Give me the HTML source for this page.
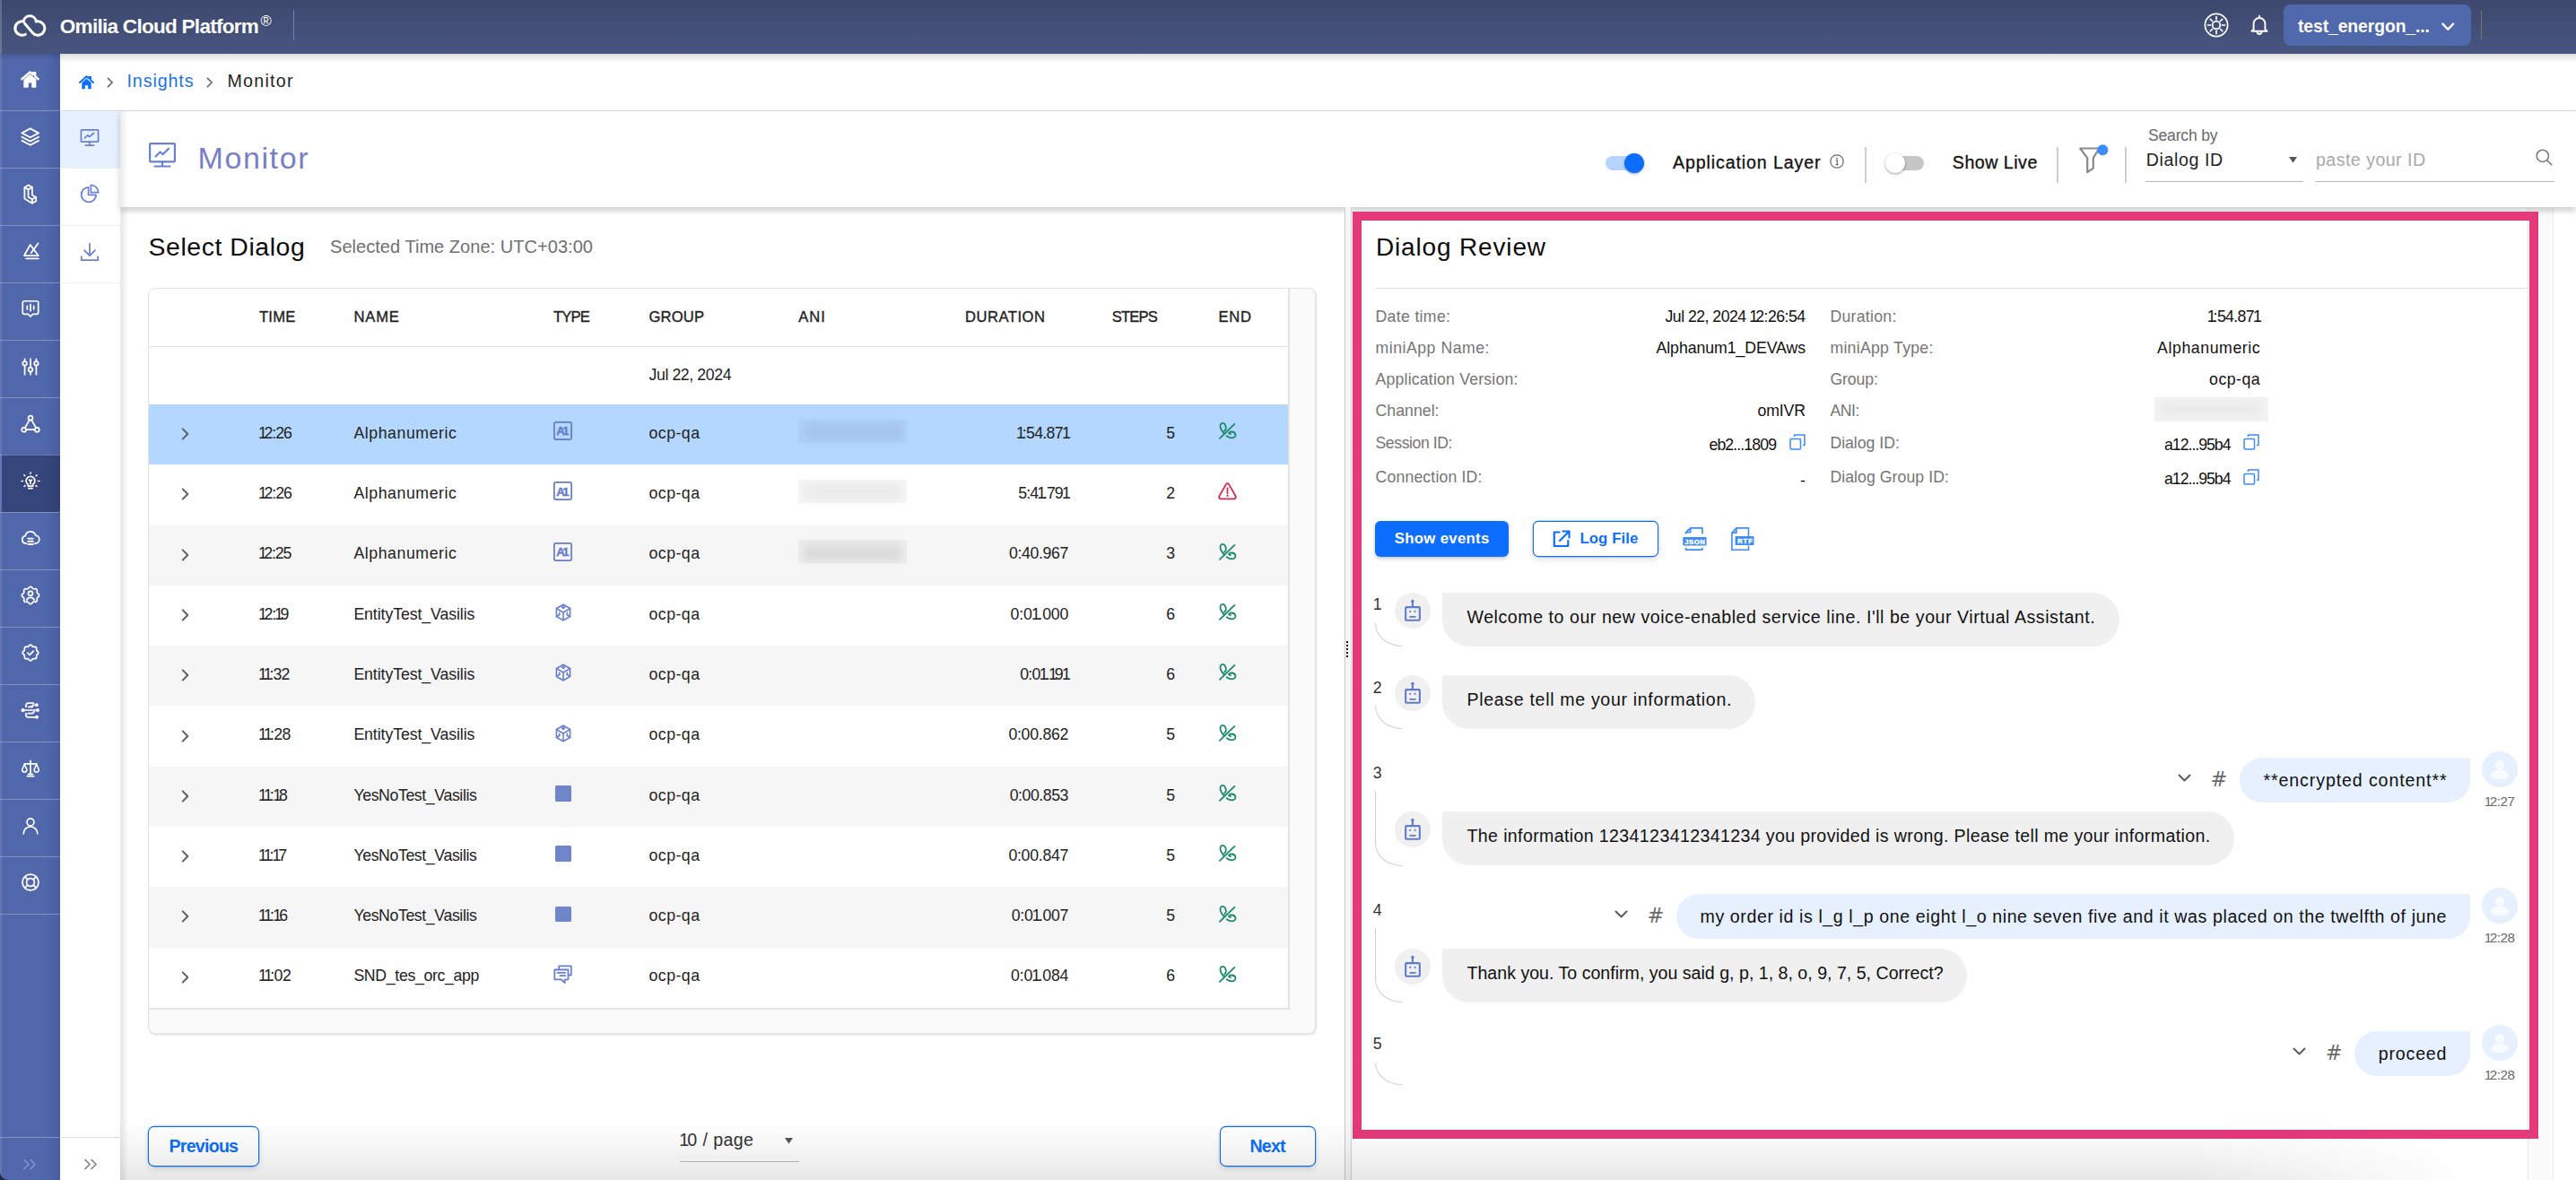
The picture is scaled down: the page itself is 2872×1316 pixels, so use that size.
<!DOCTYPE html>
<html lang="en"><head><meta charset="utf-8"><title>Monitor - Omilia Cloud Platform</title>
<style>
html,body{margin:0;padding:0;}
body{width:2872px;height:1316px;overflow:hidden;background:#fff;position:relative;font-family:"Liberation Sans",sans-serif;}
.a{position:absolute;}
.t{position:absolute;white-space:pre;font-family:"Liberation Sans",sans-serif;}
svg{position:absolute;overflow:visible;}
.ic{fill:none;stroke:#fff;stroke-width:1.9;stroke-linecap:round;stroke-linejoin:round;}
.ip{fill:none;stroke:#6c80d0;stroke-width:1.9;stroke-linecap:round;stroke-linejoin:round;}
</style></head><body>
<div class="a" style="left:67px;top:60px;width:2805px;height:63px;background:#fff;border-bottom:1px solid #d9d9d9;"></div>
<div class="a" style="left:134px;top:231px;width:2738px;height:1085px;background:#fff;"></div>
<div class="a" style="left:67px;top:60px;width:2805px;height:10px;background:linear-gradient(rgba(0,0,0,.13),rgba(0,0,0,0));"></div>
<div class="a" style="left:2818.3px;top:231px;width:26.5px;height:1085px;background:#fafafa;border-left:1.5px solid #e8e8e8;border-right:1.5px solid #ebebeb;"></div>
<div class="a" style="left:0;top:0;width:2872px;height:60px;background:linear-gradient(#3c486d,#48557f);"></div>
<svg style="left:14px;top:13px" width="38" height="30" viewBox="0 0 38 30"><path d="M14.4 25.2A7.7 7.7 0 1 1 12.2 11A7.1 7.1 0 0 1 26.3 11A7.7 7.7 0 1 1 22.6 23.9L13.6 13.2" fill="none" stroke="#fff" stroke-width="3" stroke-linecap="round" stroke-linejoin="round"/></svg>
<span class="t" style="left:66.8px;top:19px;font-size:22.5px;line-height:22.5px;letter-spacing:-0.71px;color:#fff;font-weight:700;">Omilia Cloud Platform</span>
<span class="t" style="left:290.5px;top:15px;font-size:16.5px;line-height:16.5px;letter-spacing:0.49px;color:#fff;">®</span>
<div class="a" style="left:327px;top:11px;width:1px;height:34px;background:#6f80c4;"></div>
<svg style="left:2457px;top:14px" width="28" height="28" viewBox="0 0 28 28"><g fill="none" stroke="#fff" stroke-width="1.7" stroke-linecap="round"><circle cx="14" cy="14" r="12.6"/><circle cx="14" cy="14" r="4.3"/><path d="M14 4.5v3.2M14 20.3v3.2M4.5 14h3.2M20.3 14h3.2M7.3 7.3l2.2 2.2M18.5 18.5l2.2 2.2M7.3 20.7l2.2-2.2M18.5 9.5l2.2-2.2"/></g></svg>
<svg style="left:2508px;top:16px" width="22" height="23" viewBox="0 0 22 23"><path d="M11 1.6v1.6M4.6 16.8V10.4a6.4 6.4 0 0 1 12.8 0v6.4l2.2 2H2.4zM8.6 19.6a2.4 2.4 0 0 0 4.8 0" fill="none" stroke="#fff" stroke-width="1.9" stroke-linecap="round" stroke-linejoin="round"/></svg>
<div class="a" style="left:2546px;top:5px;width:209px;height:46px;border-radius:8px;background:#5068ac;"></div>
<span class="t" style="left:2562.0px;top:20px;font-size:19.3px;line-height:19.3px;letter-spacing:-0.06px;color:#fff;font-weight:700;">test_energon_...</span>
<svg style="left:2722px;top:25px" width="14.500" height="10" viewBox="0 0 16 11"><path d="M1.500 1.800L8 8.600l6.500-6.800" fill="none" stroke="#fff" stroke-width="2.600" stroke-linecap="round" stroke-linejoin="round"/></svg>
<div class="a" style="left:2766px;top:12px;width:1px;height:32px;background:#7c7766;"></div>
<div class="a" style="left:0;top:60px;width:67px;height:1256px;background:#1f2845;"></div>
<div class="a" style="left:0;top:60px;width:67px;height:1256px;background:linear-gradient(90deg,#6476b3 0,#6476b3 2px,#5067ab 2px,#5067ab 52px,#485d9e 67px);border-bottom-left-radius:9px;"></div>
<div class="a" style="left:2px;top:507.1px;width:65px;height:64px;background:linear-gradient(90deg,#36457b 0,#36457b 50px,#323f72 65px);"></div>
<div class="a" style="left:0;top:123.1px;width:67px;height:1px;background:rgba(255,255,255,.28);"></div>
<div class="a" style="left:0;top:187.1px;width:67px;height:1px;background:rgba(255,255,255,.28);"></div>
<div class="a" style="left:0;top:251.1px;width:67px;height:1px;background:rgba(255,255,255,.28);"></div>
<div class="a" style="left:0;top:315.1px;width:67px;height:1px;background:rgba(255,255,255,.28);"></div>
<div class="a" style="left:0;top:379.1px;width:67px;height:1px;background:rgba(255,255,255,.28);"></div>
<div class="a" style="left:0;top:443.1px;width:67px;height:1px;background:rgba(255,255,255,.28);"></div>
<div class="a" style="left:0;top:507.1px;width:67px;height:1px;background:rgba(255,255,255,.28);"></div>
<div class="a" style="left:0;top:571.1px;width:67px;height:1px;background:rgba(255,255,255,.28);"></div>
<div class="a" style="left:0;top:635.1px;width:67px;height:1px;background:rgba(255,255,255,.28);"></div>
<div class="a" style="left:0;top:699.1px;width:67px;height:1px;background:rgba(255,255,255,.28);"></div>
<div class="a" style="left:0;top:763.1px;width:67px;height:1px;background:rgba(255,255,255,.28);"></div>
<div class="a" style="left:0;top:827.1px;width:67px;height:1px;background:rgba(255,255,255,.28);"></div>
<div class="a" style="left:0;top:891.1px;width:67px;height:1px;background:rgba(255,255,255,.28);"></div>
<div class="a" style="left:0;top:955.1px;width:67px;height:1px;background:rgba(255,255,255,.28);"></div>
<div class="a" style="left:0;top:1019.1px;width:67px;height:1px;background:rgba(255,255,255,.28);"></div>
<div class="a" style="left:0;top:1268px;width:67px;height:1px;background:rgba(255,255,255,.28);"></div>
<svg style="left:25px;top:1292px" width="16" height="13" viewBox="0 0 16 13"><path d="M2 1.5l5 5-5 5M9 1.5l5 5-5 5" fill="none" stroke="#8497d4" stroke-width="1.7" stroke-linecap="round" stroke-linejoin="round"/></svg>
<svg class="ic" style="left:22.0px;top:77.6px" width="23" height="22" viewBox="0 0 24 24"><path d="M2 11.2L12 2.6l3.6 3.1V3.6h2.6v4.3l3.8 3.3" stroke-width="2.6"/><path d="M5 11.5L12 5.6l7 5.9V21h-4.6v-5.6H9.6V21H5z" fill="#fff" stroke-width="1"/></svg>
<svg class="ic" style="left:21.8px;top:140.8px" width="23.5" height="23.5" viewBox="0 0 24 24"><path d="M12 2.5l9.5 5-9.5 5-9.5-5z"/><path d="M2.5 12l9.5 5 9.5-5"/><path d="M2.5 16.2l9.5 5 9.5-5"/></svg>
<svg class="ic" style="left:24.0px;top:204.8px" width="19" height="22.5" viewBox="3 1 19 24"><path d="M6 5.2l4.6-2.7 4.4 2.6v9.2l4.6 2.7v4.6l-4.6 2.5L6 18.6z"/><path d="M6 5.2l4.4 2.6 4.6-2.7M10.4 7.8v9l4.6 2.6 4.6-2.6M15 19.4v4.6"/></svg>
<svg class="ic" style="left:23.5px;top:268.4px" width="22" height="22" viewBox="0 0 24 24"><path d="M10.6 5.5L3.2 18.6h17.3z"/><path d="M20.2 3.8L11.6 15.4" /><path d="M5.5 22.2h15"/></svg>
<svg class="ic" style="left:22.5px;top:333.3px" width="22" height="22" viewBox="0 0 24 24"><path d="M4.5 3h15a2 2 0 0 1 2 2v12a2 2 0 0 1-2 2h-4.8L12 21.8 9.3 19H4.5a2 2 0 0 1-2-2V5a2 2 0 0 1 2-2z"/><path d="M8 9v4M12 7v8M16 9v4"/></svg>
<svg class="ic" style="left:22.5px;top:397.6px" width="22" height="22" viewBox="0 0 24 24"><path d="M5 2.5v3M5 10.5v11M12 2.5v10.5M12 18v3.5M19 2.5v3M19 10.5v11"/><circle cx="5" cy="8" r="2.5"/><circle cx="12" cy="15.5" r="2.5"/><circle cx="19" cy="8" r="2.5"/></svg>
<svg class="ic" style="left:22.5px;top:461.6px" width="22" height="22" viewBox="0 0 24 24"><circle cx="12" cy="4.5" r="2.7"/><circle cx="4" cy="18.8" r="2.7"/><circle cx="20" cy="18.8" r="2.7"/><path d="M10.7 6.9L5.4 16.4M13.3 6.9l5.3 9.5M6.8 18.8h10.4"/></svg>
<svg class="ic" style="left:22.5px;top:526.0px" width="22" height="22" viewBox="0 0 24 24"><path d="M9 15.5a5.3 5.3 0 1 1 6 0v2.2H9z"/><path d="M9.6 20.3h4.8M12 14.8v-3l-1.6-1.8M12 11.8l1.6-1.8"/><path d="M12 1v1.4M4.2 4.2l1 1M19.8 4.2l-1 1M1.2 11.5h1.5M21.3 11.5h1.5M4.4 18l1-1M19.6 18l-1-1" stroke-width="1.7"/></svg>
<svg class="ic" style="left:22.5px;top:589.6px" width="22" height="22" viewBox="0 0 24 24"><path d="M7 17.5H6.3a4.6 4.6 0 0 1-.6-9.1 6.4 6.4 0 0 1 12.4-.7 4.9 4.9 0 0 1-.5 9.8H17"/><path d="M9 11.5h6M9 15h6M9 18.5h6" stroke-width="2"/></svg>
<svg class="ic" style="left:22.5px;top:653.3px" width="22" height="22" viewBox="0 0 24 24"><path d="M12.0 1.5L12.9 1.7L13.7 2.4L14.4 3.2L15.0 3.8L15.7 4.1L16.6 4.1L17.6 4.0L18.6 4.1L19.4 4.6L19.9 5.4L20.0 6.4L19.9 7.4L19.9 8.3L20.2 9.0L20.8 9.6L21.6 10.3L22.3 11.1L22.5 12.0L22.3 12.9L21.6 13.7L20.8 14.4L20.2 15.0L19.9 15.7L19.9 16.6L20.0 17.6L19.9 18.6L19.4 19.4L18.6 19.9L17.6 20.0L16.6 19.9L15.7 19.9L15.0 20.2L14.4 20.8L13.7 21.6L12.9 22.3L12.0 22.5L11.1 22.3L10.3 21.6L9.6 20.8L9.0 20.2L8.3 19.9L7.4 19.9L6.4 20.0L5.4 19.9L4.6 19.4L4.1 18.6L4.0 17.6L4.1 16.6L4.1 15.7L3.8 15.0L3.2 14.4L2.4 13.7L1.7 12.9L1.5 12.0L1.7 11.1L2.4 10.3L3.2 9.6L3.8 9.0L4.1 8.3L4.1 7.4L4.0 6.4L4.1 5.4L4.6 4.6L5.4 4.1L6.4 4.0L7.4 4.1L8.3 4.1L9.0 3.8L9.6 3.2L10.3 2.4L11.1 1.7Z"/><circle cx="12" cy="9.6" r="2.7"/><path d="M7.4 17.6a5 5 0 0 1 9.2 0"/></svg>
<svg class="ic" style="left:22.5px;top:717.1px" width="22" height="22" viewBox="0 0 24 24"><path d="M12.0 2.3L12.8 2.6L13.6 3.2L14.2 3.9L14.7 4.5L15.4 4.7L16.2 4.7L17.1 4.7L18.1 4.8L18.8 5.2L19.2 5.9L19.3 6.9L19.3 7.8L19.3 8.6L19.5 9.3L20.1 9.8L20.8 10.4L21.4 11.2L21.6 12.0L21.4 12.8L20.8 13.6L20.1 14.2L19.5 14.7L19.3 15.4L19.3 16.2L19.3 17.1L19.2 18.1L18.8 18.8L18.1 19.2L17.1 19.3L16.2 19.3L15.4 19.3L14.7 19.5L14.2 20.1L13.6 20.8L12.8 21.4L12.0 21.6L11.2 21.4L10.4 20.8L9.8 20.1L9.3 19.5L8.6 19.3L7.8 19.3L6.9 19.3L5.9 19.2L5.2 18.8L4.8 18.1L4.7 17.1L4.7 16.2L4.7 15.4L4.5 14.7L3.9 14.2L3.2 13.6L2.6 12.8L2.3 12.0L2.6 11.2L3.2 10.4L3.9 9.8L4.5 9.3L4.7 8.6L4.7 7.8L4.7 6.9L4.8 5.9L5.2 5.2L5.9 4.8L6.9 4.7L7.8 4.7L8.6 4.7L9.3 4.5L9.8 3.9L10.4 3.2L11.2 2.6Z"/><path d="M8.6 12.2l2.4 2.4 4.5-4.7"/></svg>
<svg class="ic" style="left:22.5px;top:781.1px" width="22" height="22" viewBox="0 0 24 24"><path d="M6.5 8V6.2a2.7 2.7 0 0 1 2.7-2.7h6.5"/><path d="M9.5 8h5"/><path d="M3 12h17.5"/><path d="M6.5 16v1.8a2.7 2.7 0 0 0 2.7 2.7h9"/><path d="M9 16h5.5l2 -2.2"/><path d="M13 8l2 -2.2h3.5"/><circle cx="2.8" cy="12" r="1.3" fill="#fff"/><circle cx="20.7" cy="12" r="1.2"/><circle cx="19.7" cy="20.5" r="1.2"/><circle cx="19.6" cy="5.7" r="1.1"/></svg>
<svg class="ic" style="left:22.5px;top:845.6px" width="22" height="22" viewBox="0 0 24 24"><path d="M12 2.5v16.5M4.5 6.5h15M8 21.5h8M9.5 19h5"/><path d="M1.8 13.5L4.7 7l2.9 6.5a2.9 2.9 0 0 1-5.8 0zM16.4 13.5L19.3 7l2.9 6.5a2.9 2.9 0 0 1-5.8 0z" stroke-width="1.6"/></svg>
<svg class="ic" style="left:22.5px;top:909.6px" width="22" height="22" viewBox="0 0 24 24"><circle cx="12" cy="7.5" r="4.3"/><path d="M3.5 21.5a8.5 8.5 0 0 1 17 0"/></svg>
<svg class="ic" style="left:22.5px;top:973.4px" width="22" height="22" viewBox="0 0 24 24"><circle cx="12" cy="12" r="9.8"/><circle cx="12" cy="12" r="4.8"/><path d="M5.2 5.2l3.4 3.4M18.800 5.2l-3.4 3.4M5.2 18.8l3.4-3.4M18.8 18.8l-3.4-3.4"/></svg>
<div class="a" style="left:0;top:60px;width:67px;height:7px;background:linear-gradient(rgba(0,0,0,.13),rgba(0,0,0,0));"></div>
<div class="a" style="left:0;top:0;width:2px;height:60px;background:rgba(255,255,255,.2);"></div>
<div class="a" style="left:67px;top:124px;width:67px;height:1192px;background:#fff;"></div>
<div class="a" style="left:67px;top:124px;width:67px;height:63px;background:#e6f0ff;"></div>
<div class="a" style="left:67px;top:187px;width:67px;height:1px;background:#edf1fa;"></div>
<div class="a" style="left:67px;top:251px;width:67px;height:1px;background:#edf1fa;"></div>
<div class="a" style="left:67px;top:315px;width:67px;height:1px;background:#edf1fa;"></div>
<div class="a" style="left:67px;top:1268px;width:67px;height:1px;background:#dcdcdc;"></div>
<svg style="left:93px;top:1292px" width="16" height="13" viewBox="0 0 16 13"><path d="M2 1.500l5 5-5 5M9 1.500l5 5-5 5" fill="none" stroke="#808080" stroke-width="1.700" stroke-linecap="round" stroke-linejoin="round"/></svg>
<svg class="ip" style="left:89px;top:143px" width="22" height="21" viewBox="0 0 24 23"><rect x="1.500" y="2" width="21" height="14.500" rx="1"/><path d="M12 16.500v4M7 21h10"/><path d="M6 12l3.500-3.500 2 2L17 6" /></svg>
<svg class="ip" style="left:89px;top:205px" width="22" height="22" viewBox="0 0 24 24"><path d="M10.500 4.200A9 9 0 1 0 19.800 13.500H10.500z"/><path d="M13.500 1.500a9 9 0 0 1 9 9h-9z"/></svg>
<svg class="ip" style="left:89px;top:270px" width="22" height="22" viewBox="0 0 24 24"><path d="M12 2v14M5.500 10l6.500 6.500 6.500-6.500M2 17.500V22h20v-4.500"/></svg>
<div class="a" style="left:134px;top:124px;width:9px;height:1192px;background:linear-gradient(90deg,rgba(0,0,0,.10),rgba(0,0,0,0));"></div>
<svg style="left:88px;top:84px" width="17" height="16" viewBox="0 0 17 16"><path d="M1 8L8.500 1.300l2.600 2.300V2h2v3.400L16 8" fill="none" stroke="#0d6efd" stroke-width="2" stroke-linecap="round" stroke-linejoin="round"/><path d="M3.300 8.300L8.500 3.700l5.200 4.600V15.300h-3.500v-4H6.800v4H3.300z" fill="#0d6efd"/></svg>
<svg style="left:118.5px;top:86px" width="8" height="12" viewBox="0 0 9 14"><path d="M1.500 1.500l5.500 5.500-5.500 5.500" fill="none" stroke="#6b6b6b" stroke-width="2" stroke-linecap="round" stroke-linejoin="round"/></svg>
<span class="t" style="left:141.5px;top:81px;font-size:19.6px;line-height:19.6px;letter-spacing:0.92px;color:#1a73e8;">Insights</span>
<svg style="left:229.5px;top:86px" width="8" height="12" viewBox="0 0 9 14"><path d="M1.500 1.500l5.500 5.500-5.500 5.500" fill="none" stroke="#6b6b6b" stroke-width="2" stroke-linecap="round" stroke-linejoin="round"/></svg>
<span class="t" style="left:253.5px;top:81px;font-size:19.6px;line-height:19.6px;letter-spacing:1.28px;color:#1f1f1f;">Monitor</span>
<div class="a" style="left:134px;top:124px;width:2738px;height:107px;background:#fff;box-shadow:0 4px 7px rgba(0,0,0,.2);"></div>
<div class="a" style="left:134px;top:124px;width:9px;height:107px;background:linear-gradient(90deg,rgba(0,0,0,.08),rgba(0,0,0,0));"></div>
<svg class="ip" style="left:166px;top:158.5px;stroke-width:2.2" width="30" height="28" viewBox="0 0 30 28"><rect x="1.1" y="1.1" width="27.8" height="20.3" rx=".8"/><path d="M15 21.400v5M6.500 26.500h17M7.500 15.500l5-5 3.200 2.600 6.300-6.400"/></svg>
<span class="t" style="left:220.5px;top:159px;font-size:34px;line-height:34px;letter-spacing:1.60px;color:#777fc5;">Monitor</span>
<div class="a" style="left:1790px;top:174px;width:42px;height:16px;border-radius:8px;background:#b6d4fe;"></div>
<div class="a" style="left:1811px;top:171px;width:22px;height:22px;border-radius:11px;background:#0d6efd;box-shadow:0 1px 3px rgba(0,0,0,.35);"></div>
<span class="t" style="left:1865.0px;top:172px;font-size:19.6px;line-height:19.6px;letter-spacing:0.89px;color:#111;-webkit-text-stroke:.3px #111;">Application Layer</span>
<svg style="left:2040px;top:172px" width="16" height="16" viewBox="0 0 16 16"><circle cx="8" cy="8" r="7.200" fill="none" stroke="#666" stroke-width="1.200"/><path d="M6.700 6.800h1.600v4.700M6.500 11.600h3.200" fill="none" stroke="#666" stroke-width="1.200"/><circle cx="8" cy="4.500" r=".9" fill="#666"/></svg>
<div class="a" style="left:2079px;top:164px;width:2px;height:40px;background:#cfcfcf;"></div>
<div class="a" style="left:2103px;top:174px;width:42px;height:16px;border-radius:8px;background:#c6c6c6;"></div>
<div class="a" style="left:2101.500px;top:171px;width:22px;height:22px;border-radius:11px;background:#fff;box-shadow:0 1px 3px rgba(0,0,0,.4);"></div>
<span class="t" style="left:2176.8px;top:172px;font-size:19.6px;line-height:19.6px;letter-spacing:0.51px;color:#111;-webkit-text-stroke:.3px #111;">Show Live</span>
<div class="a" style="left:2293px;top:164px;width:2px;height:40px;background:#cfcfcf;"></div>
<svg style="left:2317px;top:163px" width="36" height="32" viewBox="0 0 36 32"><path d="M2.200 2.500H23.500L16.800 13.200V24.600L10.200 29V13.200z" fill="none" stroke="#8a8a8a" stroke-width="2.200" stroke-linejoin="round"/><circle cx="27.300" cy="4.200" r="6" fill="#3d8bfd"/></svg>
<div class="a" style="left:2369px;top:164px;width:2px;height:40px;background:#cfcfcf;"></div>
<span class="t" style="left:2395.0px;top:143px;font-size:17.6px;line-height:17.6px;letter-spacing:-0.21px;color:#6a6a6a;">Search by</span>
<span class="t" style="left:2392.8px;top:169px;font-size:19.6px;line-height:19.6px;letter-spacing:0.61px;color:#1f1f1f;">Dialog ID</span>
<svg style="left:2552px;top:175px" width="9" height="7" viewBox="0 0 9 7"><path d="M0 0h9L4.500 6.500z" fill="#555"/></svg>
<div class="a" style="left:2392px;top:202px;width:176px;height:1px;background:#bdbdbd;"></div>
<span class="t" style="left:2582.0px;top:169px;font-size:19.6px;line-height:19.6px;letter-spacing:0.46px;color:#a9a9a9;">paste your ID</span>
<div class="a" style="left:2581px;top:202px;width:267px;height:1px;background:#bdbdbd;"></div>
<svg style="left:2827px;top:166px" width="19" height="19" viewBox="0 0 19 19"><circle cx="7.800" cy="7.800" r="6.600" fill="none" stroke="#777" stroke-width="1.500"/><path d="M12.700 12.700l5 5" stroke="#777" stroke-width="1.600" stroke-linecap="round"/></svg>
<span class="t" style="left:165.5px;top:261px;font-size:28.4px;line-height:28.4px;letter-spacing:0.58px;color:#0b0b0b;">Select Dialog</span>
<span class="t" style="left:368.0px;top:265px;font-size:20px;line-height:20px;letter-spacing:0.04px;color:#707070;">Selected Time Zone: UTC+03:00</span>
<div class="a" style="left:165px;top:321px;width:1299.5px;height:830px;border:1px solid #e2e2e2;border-radius:8px;background:#fafafa;box-shadow:1px 1.5px 0 .5px #ebebeb;overflow:hidden;"><div class="a" style="left:0;top:0;width:1270px;height:802px;background:#fff;border-right:2px solid #e4e4e4;border-bottom:2px solid #e4e4e4;"></div></div>
<span class="t" style="left:288.9px;top:346px;font-size:16.6px;line-height:16.6px;letter-spacing:0.29px;color:#222;-webkit-text-stroke:.35px #222;">TIME</span>
<span class="t" style="left:394.4px;top:346px;font-size:16.6px;line-height:16.6px;letter-spacing:0.85px;color:#222;-webkit-text-stroke:.35px #222;">NAME</span>
<span class="t" style="left:616.9px;top:346px;font-size:16.6px;line-height:16.6px;letter-spacing:-0.78px;color:#222;-webkit-text-stroke:.35px #222;">TYPE</span>
<span class="t" style="left:723.5px;top:346px;font-size:16.6px;line-height:16.6px;letter-spacing:0.16px;color:#222;-webkit-text-stroke:.35px #222;">GROUP</span>
<span class="t" style="left:890.3px;top:346px;font-size:16.6px;line-height:16.6px;letter-spacing:0.91px;color:#222;-webkit-text-stroke:.35px #222;">ANI</span>
<span class="t" style="left:1076.0px;top:346px;font-size:16.6px;line-height:16.6px;letter-spacing:0.51px;color:#222;-webkit-text-stroke:.35px #222;">DURATION</span>
<span class="t" style="left:1239.8px;top:346px;font-size:16.6px;line-height:16.6px;letter-spacing:-0.86px;color:#222;-webkit-text-stroke:.35px #222;">STEPS</span>
<span class="t" style="left:1358.6px;top:346px;font-size:16.6px;line-height:16.6px;letter-spacing:0.63px;color:#222;-webkit-text-stroke:.35px #222;">END</span>
<div class="a" style="left:166px;top:385.5px;width:1270px;height:1px;background:#e2e2e2;"></div>
<span class="t" style="left:723.5px;top:410px;font-size:17.7px;line-height:17.7px;letter-spacing:-0.40px;color:#222;">Jul 22, 2024</span>
<div class="a" style="left:166px;top:451.0px;width:1270px;height:67.3px;background:#b3d7ff;"></div>
<svg style="left:201.5px;top:477.0px" width="9" height="14" viewBox="0 0 9 15"><path d="M1.5 1.5l6 6-6 6" fill="none" stroke="#5f5f5f" stroke-width="2.1" stroke-linecap="round" stroke-linejoin="round"/></svg>
<span class="t" style="left:288.9px;top:475px;font-size:17.7px;line-height:17.7px;letter-spacing:-1.04px;color:#222;"><span style="margin:0 -2.32px 0 -0.88px">1</span>2:26</span>
<span class="t" style="left:394.4px;top:475px;font-size:17.7px;line-height:17.7px;letter-spacing:0.58px;color:#222;">Alphanumeric</span>
<svg style="left:617px;top:470.0px" width="21" height="21" viewBox="0 0 21 21"><rect x=".9" y=".9" width="19.2" height="19.2" rx="1.5" fill="none" stroke="#657bc9" stroke-width="1.7"/></svg>
<span class="t" style="left:620.3px;top:474px;font-size:13.2px;line-height:13.2px;letter-spacing:-2.46px;color:#657bc9;font-weight:700;-webkit-text-stroke:.4px #657bc9;">A1</span>
<span class="t" style="left:723.5px;top:475px;font-size:17.7px;line-height:17.7px;letter-spacing:0.48px;color:#222;">ocp-qa</span>
<div class="a" style="left:896px;top:472.0px;width:110px;height:19px;background:rgba(150,175,215,.40);filter:blur(5px);border-radius:4px;"></div>
<div class="a" style="left:890px;top:467.5px;width:121px;height:26px;background:rgba(160,190,230,.25);"></div>
<span class="t" style="left:1133.8px;top:475px;font-size:17.7px;line-height:17.7px;letter-spacing:-0.69px;color:#222;"><span style="margin:0 -2.32px 0 -0.88px">1</span>:54.87<span style="margin:0 -2.32px 0 -0.88px">1</span></span>
<span class="t" style="left:1300.2px;top:475px;font-size:17.7px;line-height:17.7px;letter-spacing:0.53px;color:#222;">5</span>
<svg style="left:1359px;top:471.2px" width="19.500" height="19" viewBox="0 0 19.500 19"><g fill="none" stroke="#1a8a6a" stroke-width="1.8" stroke-linecap="round" stroke-linejoin="round"><path d="M0.9 17.8L17.4 1.9"/><path d="M5.8 12.4C3 9.4 1.3 6.4 1.5 3.8 1.6 1.6 3.2.5 5 1c1.600.5 2.300 2.100 2.800 4.200.4 1.800-.2 3.100-1.600 4.300"/><path d="M8.700 15.200c2.100 1.600 4.300 2.300 6.500 2.100 2.300-.3 3.600-1.800 3.200-3.800-.4-1.900-2.100-2.900-4.200-3-1.600-.1-2.600.5-3.200 1.700l1.900.9"/></g></svg>
<svg style="left:201.5px;top:544.3px" width="9" height="14" viewBox="0 0 9 15"><path d="M1.5 1.5l6 6-6 6" fill="none" stroke="#5f5f5f" stroke-width="2.1" stroke-linecap="round" stroke-linejoin="round"/></svg>
<span class="t" style="left:288.9px;top:542px;font-size:17.7px;line-height:17.7px;letter-spacing:-1.04px;color:#222;"><span style="margin:0 -2.32px 0 -0.88px">1</span>2:26</span>
<span class="t" style="left:394.4px;top:542px;font-size:17.7px;line-height:17.7px;letter-spacing:0.58px;color:#222;">Alphanumeric</span>
<svg style="left:617px;top:537.3px" width="21" height="21" viewBox="0 0 21 21"><rect x=".9" y=".9" width="19.2" height="19.2" rx="1.5" fill="none" stroke="#657bc9" stroke-width="1.7"/></svg>
<span class="t" style="left:620.3px;top:542px;font-size:13.2px;line-height:13.2px;letter-spacing:-2.46px;color:#657bc9;font-weight:700;-webkit-text-stroke:.4px #657bc9;">A1</span>
<span class="t" style="left:723.5px;top:542px;font-size:17.7px;line-height:17.7px;letter-spacing:0.48px;color:#222;">ocp-qa</span>
<div class="a" style="left:896px;top:539.3px;width:110px;height:19px;background:rgba(228,228,228,.40);filter:blur(5px);border-radius:4px;"></div>
<div class="a" style="left:890px;top:534.8px;width:121px;height:26px;background:rgba(0,0,0,.035);"></div>
<span class="t" style="left:1135.2px;top:542px;font-size:17.7px;line-height:17.7px;letter-spacing:-0.89px;color:#222;">5:4<span style="margin:0 -2.32px 0 -0.88px">1</span>.79<span style="margin:0 -2.32px 0 -0.88px">1</span></span>
<span class="t" style="left:1300.2px;top:542px;font-size:17.7px;line-height:17.7px;letter-spacing:0.53px;color:#222;">2</span>
<svg style="left:1358px;top:538.2px" width="21" height="19.500" viewBox="0 0 21 19.500"><g fill="none" stroke="#db2a4b" stroke-width="1.800" stroke-linecap="round" stroke-linejoin="round"><path d="M8.900 2.100L1.400 15.200A2 2 0 0 0 3.100 18.300H17.900A2 2 0 0 0 19.600 15.200L12.100 2.100A1.850 1.850 0 0 0 8.900 2.100Z"/><path d="M10.500 6.500v5.800"/></g><circle cx="10.500" cy="14.900" r="1.100" fill="#db2a4b"/></svg>
<div class="a" style="left:166px;top:585.6px;width:1270px;height:67.3px;background:#f6f6f6;"></div>
<svg style="left:201.5px;top:611.6px" width="9" height="14" viewBox="0 0 9 15"><path d="M1.5 1.5l6 6-6 6" fill="none" stroke="#5f5f5f" stroke-width="2.1" stroke-linecap="round" stroke-linejoin="round"/></svg>
<span class="t" style="left:288.9px;top:609px;font-size:17.7px;line-height:17.7px;letter-spacing:-1.19px;color:#222;"><span style="margin:0 -2.32px 0 -0.88px">1</span>2:25</span>
<span class="t" style="left:394.4px;top:609px;font-size:17.7px;line-height:17.7px;letter-spacing:0.58px;color:#222;">Alphanumeric</span>
<svg style="left:617px;top:604.6px" width="21" height="21" viewBox="0 0 21 21"><rect x=".9" y=".9" width="19.2" height="19.2" rx="1.5" fill="none" stroke="#657bc9" stroke-width="1.7"/></svg>
<span class="t" style="left:620.3px;top:609px;font-size:13.2px;line-height:13.2px;letter-spacing:-2.46px;color:#657bc9;font-weight:700;-webkit-text-stroke:.4px #657bc9;">A1</span>
<span class="t" style="left:723.5px;top:609px;font-size:17.7px;line-height:17.7px;letter-spacing:0.48px;color:#222;">ocp-qa</span>
<div class="a" style="left:896px;top:606.6px;width:110px;height:19px;background:rgba(205,205,205,.42);filter:blur(5px);border-radius:4px;"></div>
<div class="a" style="left:890px;top:602.1px;width:121px;height:26px;background:rgba(0,0,0,.035);"></div>
<span class="t" style="left:1125.1px;top:609px;font-size:17.7px;line-height:17.7px;letter-spacing:-0.37px;color:#222;">0:40.967</span>
<span class="t" style="left:1300.2px;top:609px;font-size:17.7px;line-height:17.7px;letter-spacing:0.53px;color:#222;">3</span>
<svg style="left:1359px;top:605.8px" width="19.500" height="19" viewBox="0 0 19.500 19"><g fill="none" stroke="#1a8a6a" stroke-width="1.8" stroke-linecap="round" stroke-linejoin="round"><path d="M0.9 17.8L17.4 1.9"/><path d="M5.8 12.4C3 9.4 1.3 6.4 1.5 3.8 1.6 1.6 3.2.5 5 1c1.600.5 2.300 2.100 2.800 4.200.4 1.800-.2 3.100-1.600 4.300"/><path d="M8.700 15.200c2.100 1.600 4.300 2.300 6.500 2.100 2.300-.3 3.600-1.800 3.200-3.800-.4-1.900-2.100-2.900-4.200-3-1.600-.1-2.600.5-3.200 1.700l1.900.9"/></g></svg>
<svg style="left:201.5px;top:678.9px" width="9" height="14" viewBox="0 0 9 15"><path d="M1.5 1.5l6 6-6 6" fill="none" stroke="#5f5f5f" stroke-width="2.1" stroke-linecap="round" stroke-linejoin="round"/></svg>
<span class="t" style="left:288.9px;top:677px;font-size:17.7px;line-height:17.7px;letter-spacing:-1.12px;color:#222;"><span style="margin:0 -2.32px 0 -0.88px">1</span>2:<span style="margin:0 -2.32px 0 -0.88px">1</span>9</span>
<span class="t" style="left:394.4px;top:677px;font-size:17.7px;line-height:17.7px;letter-spacing:-0.08px;color:#222;">EntityTest_Vasilis</span>
<svg class="ip" style="left:618.500px;top:672.9px;stroke-width:1.700" width="18" height="20" viewBox="0 0 19 21"><path d="M9.5 1.200l8 4.600v9.400l-8 4.600-8-4.600V5.800z"/><path d="M1.500 5.800l8 4.700 8-4.700M9.500 10.500v9.300M9.500 1.200v4.300M7.800 4.200l1.700 1.500 1.700-1.500M1.500 15.200l3.800-2.200M17.500 15.200l-3.800-2.200M4.900 10.900l.4 2.100-2 .7M14.100 10.900l-.4 2.100 2 .7"/></svg>
<span class="t" style="left:723.5px;top:677px;font-size:17.7px;line-height:17.7px;letter-spacing:0.48px;color:#222;">ocp-qa</span>
<span class="t" style="left:1126.6px;top:677px;font-size:17.7px;line-height:17.7px;letter-spacing:-0.12px;color:#222;">0:0<span style="margin:0 -2.32px 0 -0.88px">1</span>.000</span>
<span class="t" style="left:1300.2px;top:677px;font-size:17.7px;line-height:17.7px;letter-spacing:0.53px;color:#222;">6</span>
<svg style="left:1359px;top:673.1px" width="19.500" height="19" viewBox="0 0 19.500 19"><g fill="none" stroke="#1a8a6a" stroke-width="1.8" stroke-linecap="round" stroke-linejoin="round"><path d="M0.9 17.8L17.4 1.9"/><path d="M5.8 12.4C3 9.4 1.3 6.4 1.5 3.8 1.6 1.6 3.2.5 5 1c1.600.5 2.300 2.100 2.800 4.200.4 1.800-.2 3.100-1.600 4.300"/><path d="M8.700 15.200c2.100 1.600 4.300 2.300 6.500 2.100 2.300-.3 3.600-1.800 3.200-3.800-.4-1.900-2.100-2.900-4.200-3-1.600-.1-2.600.5-3.200 1.700l1.900.9"/></g></svg>
<div class="a" style="left:166px;top:720.2px;width:1270px;height:67.3px;background:#f6f6f6;"></div>
<svg style="left:201.5px;top:746.2px" width="9" height="14" viewBox="0 0 9 15"><path d="M1.5 1.5l6 6-6 6" fill="none" stroke="#5f5f5f" stroke-width="2.1" stroke-linecap="round" stroke-linejoin="round"/></svg>
<span class="t" style="left:288.9px;top:744px;font-size:17.7px;line-height:17.7px;letter-spacing:-0.86px;color:#222;"><span style="margin:0 -2.32px 0 -0.88px">1</span><span style="margin:0 -2.32px 0 -0.88px">1</span>:32</span>
<span class="t" style="left:394.4px;top:744px;font-size:17.7px;line-height:17.7px;letter-spacing:-0.08px;color:#222;">EntityTest_Vasilis</span>
<svg class="ip" style="left:618.500px;top:740.2px;stroke-width:1.700" width="18" height="20" viewBox="0 0 19 21"><path d="M9.5 1.200l8 4.600v9.400l-8 4.600-8-4.600V5.800z"/><path d="M1.500 5.800l8 4.700 8-4.700M9.500 10.500v9.300M9.500 1.200v4.300M7.800 4.200l1.700 1.500 1.700-1.500M1.500 15.200l3.800-2.200M17.500 15.200l-3.800-2.200M4.900 10.900l.4 2.100-2 .7M14.100 10.900l-.4 2.100 2 .7"/></svg>
<span class="t" style="left:723.5px;top:744px;font-size:17.7px;line-height:17.7px;letter-spacing:0.48px;color:#222;">ocp-qa</span>
<span class="t" style="left:1137.2px;top:744px;font-size:17.7px;line-height:17.7px;letter-spacing:-0.72px;color:#222;">0:0<span style="margin:0 -2.32px 0 -0.88px">1</span>.<span style="margin:0 -2.32px 0 -0.88px">1</span>9<span style="margin:0 -2.32px 0 -0.88px">1</span></span>
<span class="t" style="left:1300.2px;top:744px;font-size:17.7px;line-height:17.7px;letter-spacing:0.53px;color:#222;">6</span>
<svg style="left:1359px;top:740.4px" width="19.500" height="19" viewBox="0 0 19.500 19"><g fill="none" stroke="#1a8a6a" stroke-width="1.8" stroke-linecap="round" stroke-linejoin="round"><path d="M0.9 17.8L17.4 1.9"/><path d="M5.8 12.4C3 9.4 1.3 6.4 1.5 3.8 1.6 1.6 3.2.5 5 1c1.600.5 2.300 2.100 2.800 4.200.4 1.800-.2 3.100-1.600 4.300"/><path d="M8.700 15.200c2.100 1.600 4.300 2.300 6.500 2.100 2.300-.3 3.600-1.800 3.200-3.800-.4-1.900-2.100-2.900-4.200-3-1.600-.1-2.600.5-3.200 1.700l1.900.9"/></g></svg>
<svg style="left:201.5px;top:813.5px" width="9" height="14" viewBox="0 0 9 15"><path d="M1.5 1.5l6 6-6 6" fill="none" stroke="#5f5f5f" stroke-width="2.1" stroke-linecap="round" stroke-linejoin="round"/></svg>
<span class="t" style="left:288.9px;top:811px;font-size:17.7px;line-height:17.7px;letter-spacing:-0.64px;color:#222;"><span style="margin:0 -2.32px 0 -0.88px">1</span><span style="margin:0 -2.32px 0 -0.88px">1</span>:28</span>
<span class="t" style="left:394.4px;top:811px;font-size:17.7px;line-height:17.7px;letter-spacing:-0.08px;color:#222;">EntityTest_Vasilis</span>
<svg class="ip" style="left:618.500px;top:807.5px;stroke-width:1.700" width="18" height="20" viewBox="0 0 19 21"><path d="M9.5 1.200l8 4.600v9.400l-8 4.600-8-4.600V5.800z"/><path d="M1.500 5.800l8 4.700 8-4.700M9.500 10.500v9.300M9.500 1.200v4.300M7.800 4.200l1.700 1.500 1.700-1.500M1.500 15.200l3.800-2.200M17.500 15.200l-3.800-2.200M4.900 10.900l.4 2.100-2 .7M14.100 10.900l-.4 2.100 2 .7"/></svg>
<span class="t" style="left:723.5px;top:811px;font-size:17.7px;line-height:17.7px;letter-spacing:0.48px;color:#222;">ocp-qa</span>
<span class="t" style="left:1124.4px;top:811px;font-size:17.7px;line-height:17.7px;letter-spacing:-0.27px;color:#222;">0:00.862</span>
<span class="t" style="left:1300.2px;top:811px;font-size:17.7px;line-height:17.7px;letter-spacing:0.53px;color:#222;">5</span>
<svg style="left:1359px;top:807.7px" width="19.500" height="19" viewBox="0 0 19.500 19"><g fill="none" stroke="#1a8a6a" stroke-width="1.8" stroke-linecap="round" stroke-linejoin="round"><path d="M0.9 17.8L17.4 1.9"/><path d="M5.8 12.4C3 9.4 1.3 6.4 1.5 3.8 1.6 1.6 3.2.5 5 1c1.600.5 2.300 2.100 2.800 4.200.4 1.800-.2 3.100-1.600 4.300"/><path d="M8.700 15.200c2.100 1.600 4.300 2.300 6.500 2.100 2.300-.3 3.600-1.800 3.200-3.800-.4-1.900-2.100-2.900-4.200-3-1.600-.1-2.600.5-3.200 1.700l1.900.9"/></g></svg>
<div class="a" style="left:166px;top:854.8px;width:1270px;height:67.3px;background:#f6f6f6;"></div>
<svg style="left:201.5px;top:880.8px" width="9" height="14" viewBox="0 0 9 15"><path d="M1.5 1.5l6 6-6 6" fill="none" stroke="#5f5f5f" stroke-width="2.1" stroke-linecap="round" stroke-linejoin="round"/></svg>
<span class="t" style="left:288.9px;top:879px;font-size:17.7px;line-height:17.7px;letter-spacing:-0.71px;color:#222;"><span style="margin:0 -2.32px 0 -0.88px">1</span><span style="margin:0 -2.32px 0 -0.88px">1</span>:<span style="margin:0 -2.32px 0 -0.88px">1</span>8</span>
<span class="t" style="left:394.4px;top:879px;font-size:17.7px;line-height:17.7px;letter-spacing:-0.38px;color:#222;">YesNoTest_Vasilis</span>
<div class="a" style="left:619px;top:876.0px;width:17.600px;height:17.900px;border-radius:1.500px;background:#6f86cb;"></div>
<span class="t" style="left:723.5px;top:879px;font-size:17.7px;line-height:17.7px;letter-spacing:0.48px;color:#222;">ocp-qa</span>
<span class="t" style="left:1125.7px;top:879px;font-size:17.7px;line-height:17.7px;letter-spacing:-0.45px;color:#222;">0:00.853</span>
<span class="t" style="left:1300.2px;top:879px;font-size:17.7px;line-height:17.7px;letter-spacing:0.53px;color:#222;">5</span>
<svg style="left:1359px;top:875.0px" width="19.500" height="19" viewBox="0 0 19.500 19"><g fill="none" stroke="#1a8a6a" stroke-width="1.8" stroke-linecap="round" stroke-linejoin="round"><path d="M0.9 17.8L17.4 1.9"/><path d="M5.8 12.4C3 9.4 1.3 6.4 1.5 3.8 1.6 1.6 3.2.5 5 1c1.600.5 2.300 2.100 2.800 4.200.4 1.800-.2 3.100-1.600 4.300"/><path d="M8.700 15.200c2.100 1.600 4.300 2.300 6.500 2.100 2.300-.3 3.600-1.800 3.200-3.800-.4-1.900-2.100-2.900-4.200-3-1.600-.1-2.600.5-3.200 1.700l1.900.9"/></g></svg>
<svg style="left:201.5px;top:948.1px" width="9" height="14" viewBox="0 0 9 15"><path d="M1.5 1.5l6 6-6 6" fill="none" stroke="#5f5f5f" stroke-width="2.1" stroke-linecap="round" stroke-linejoin="round"/></svg>
<span class="t" style="left:288.9px;top:946px;font-size:17.7px;line-height:17.7px;letter-spacing:-0.91px;color:#222;"><span style="margin:0 -2.32px 0 -0.88px">1</span><span style="margin:0 -2.32px 0 -0.88px">1</span>:<span style="margin:0 -2.32px 0 -0.88px">1</span>7</span>
<span class="t" style="left:394.4px;top:946px;font-size:17.7px;line-height:17.7px;letter-spacing:-0.38px;color:#222;">YesNoTest_Vasilis</span>
<div class="a" style="left:619px;top:943.3px;width:17.600px;height:17.900px;border-radius:1.500px;background:#6f86cb;"></div>
<span class="t" style="left:723.5px;top:946px;font-size:17.7px;line-height:17.7px;letter-spacing:0.48px;color:#222;">ocp-qa</span>
<span class="t" style="left:1124.4px;top:946px;font-size:17.7px;line-height:17.7px;letter-spacing:-0.27px;color:#222;">0:00.847</span>
<span class="t" style="left:1300.2px;top:946px;font-size:17.7px;line-height:17.7px;letter-spacing:0.53px;color:#222;">5</span>
<svg style="left:1359px;top:942.3px" width="19.500" height="19" viewBox="0 0 19.500 19"><g fill="none" stroke="#1a8a6a" stroke-width="1.8" stroke-linecap="round" stroke-linejoin="round"><path d="M0.9 17.8L17.4 1.9"/><path d="M5.8 12.4C3 9.4 1.3 6.4 1.5 3.8 1.6 1.6 3.2.5 5 1c1.600.5 2.300 2.100 2.800 4.200.4 1.800-.2 3.100-1.600 4.300"/><path d="M8.700 15.200c2.100 1.600 4.300 2.300 6.500 2.100 2.300-.3 3.600-1.800 3.200-3.800-.4-1.900-2.100-2.900-4.200-3-1.600-.1-2.600.5-3.200 1.700l1.900.9"/></g></svg>
<div class="a" style="left:166px;top:989.4px;width:1270px;height:67.3px;background:#f6f6f6;"></div>
<svg style="left:201.5px;top:1015.4px" width="9" height="14" viewBox="0 0 9 15"><path d="M1.5 1.5l6 6-6 6" fill="none" stroke="#5f5f5f" stroke-width="2.1" stroke-linecap="round" stroke-linejoin="round"/></svg>
<span class="t" style="left:288.9px;top:1013px;font-size:17.7px;line-height:17.7px;letter-spacing:-0.64px;color:#222;"><span style="margin:0 -2.32px 0 -0.88px">1</span><span style="margin:0 -2.32px 0 -0.88px">1</span>:<span style="margin:0 -2.32px 0 -0.88px">1</span>6</span>
<span class="t" style="left:394.4px;top:1013px;font-size:17.7px;line-height:17.7px;letter-spacing:-0.38px;color:#222;">YesNoTest_Vasilis</span>
<div class="a" style="left:619px;top:1010.6px;width:17.600px;height:17.900px;border-radius:1.500px;background:#6f86cb;"></div>
<span class="t" style="left:723.5px;top:1013px;font-size:17.7px;line-height:17.7px;letter-spacing:0.48px;color:#222;">ocp-qa</span>
<span class="t" style="left:1127.8px;top:1013px;font-size:17.7px;line-height:17.7px;letter-spacing:-0.29px;color:#222;">0:0<span style="margin:0 -2.32px 0 -0.88px">1</span>.007</span>
<span class="t" style="left:1300.2px;top:1013px;font-size:17.7px;line-height:17.7px;letter-spacing:0.53px;color:#222;">5</span>
<svg style="left:1359px;top:1009.6px" width="19.500" height="19" viewBox="0 0 19.500 19"><g fill="none" stroke="#1a8a6a" stroke-width="1.8" stroke-linecap="round" stroke-linejoin="round"><path d="M0.9 17.8L17.4 1.9"/><path d="M5.8 12.4C3 9.4 1.3 6.4 1.5 3.8 1.6 1.6 3.2.5 5 1c1.600.5 2.300 2.100 2.800 4.200.4 1.800-.2 3.100-1.600 4.300"/><path d="M8.700 15.200c2.100 1.600 4.300 2.300 6.500 2.100 2.300-.3 3.600-1.800 3.200-3.800-.4-1.900-2.100-2.900-4.200-3-1.600-.1-2.600.5-3.200 1.700l1.900.9"/></g></svg>
<svg style="left:201.5px;top:1082.7px" width="9" height="14" viewBox="0 0 9 15"><path d="M1.5 1.5l6 6-6 6" fill="none" stroke="#5f5f5f" stroke-width="2.1" stroke-linecap="round" stroke-linejoin="round"/></svg>
<span class="t" style="left:288.9px;top:1080px;font-size:17.7px;line-height:17.7px;letter-spacing:-0.51px;color:#222;"><span style="margin:0 -2.32px 0 -0.88px">1</span><span style="margin:0 -2.32px 0 -0.88px">1</span>:02</span>
<span class="t" style="left:394.4px;top:1080px;font-size:17.7px;line-height:17.7px;letter-spacing:-0.32px;color:#222;">SND_tes_orc_app</span>
<svg class="ip" style="left:617px;top:1076.0px;stroke-width:1.800" width="21" height="21" viewBox="0 0 21 21"><path d="M6.200 4.600V1.400H19.800V11.500H17.400"/><path d="M1.300 5.500H16.500V16.300H12.700V20L8.500 16.300H1.300Z"/><path d="M4.400 8.800H13.200M7.300 12.200H13.200"/></svg>
<span class="t" style="left:723.5px;top:1080px;font-size:17.7px;line-height:17.7px;letter-spacing:0.48px;color:#222;">ocp-qa</span>
<span class="t" style="left:1127.0px;top:1080px;font-size:17.7px;line-height:17.7px;letter-spacing:-0.18px;color:#222;">0:0<span style="margin:0 -2.32px 0 -0.88px">1</span>.084</span>
<span class="t" style="left:1300.2px;top:1080px;font-size:17.7px;line-height:17.7px;letter-spacing:0.53px;color:#222;">6</span>
<svg style="left:1359px;top:1076.9px" width="19.500" height="19" viewBox="0 0 19.500 19"><g fill="none" stroke="#1a8a6a" stroke-width="1.8" stroke-linecap="round" stroke-linejoin="round"><path d="M0.9 17.8L17.4 1.9"/><path d="M5.8 12.4C3 9.4 1.3 6.4 1.5 3.8 1.6 1.6 3.2.5 5 1c1.600.5 2.300 2.100 2.800 4.200.4 1.800-.2 3.100-1.600 4.300"/><path d="M8.700 15.200c2.100 1.600 4.300 2.300 6.500 2.100 2.300-.3 3.600-1.800 3.200-3.800-.4-1.900-2.100-2.900-4.200-3-1.600-.1-2.600.5-3.200 1.700l1.900.9"/></g></svg>
<div class="a" style="left:165px;top:1256px;width:122px;height:43px;border:1px solid #0d6efd;border-radius:7px;background:#fff;box-shadow:0 0 0 .15px #0d6efd,0 3px 6px rgba(0,0,0,.12);"></div>
<span class="t" style="left:188.5px;top:1269px;font-size:19.6px;line-height:19.6px;letter-spacing:-0.75px;color:#0d6efd;font-weight:700;">Previous</span>
<span class="t" style="left:758.0px;top:1262px;font-size:19.6px;line-height:19.6px;letter-spacing:0.41px;color:#333;"><span style="margin:0 -2.17px 0 -0.83px">1</span>0 / page</span>
<svg style="left:875px;top:1268.5px" width="9" height="7" viewBox="0 0 9 7"><path d="M0 0h9L4.500 6.500z" fill="#555"/></svg>
<div class="a" style="left:758px;top:1295px;width:133px;height:1px;background:#bdbdbd;"></div>
<div class="a" style="left:1360px;top:1256px;width:105px;height:43px;border:1px solid #0d6efd;border-radius:7px;background:#fff;box-shadow:0 0 0 .15px #0d6efd,0 3px 6px rgba(0,0,0,.12);"></div>
<span class="t" style="left:1393.5px;top:1269px;font-size:19.6px;line-height:19.6px;letter-spacing:-0.83px;color:#0d6efd;font-weight:700;">Next</span>
<div class="a" style="left:1499px;top:231px;width:8px;height:1085px;background:#f6f6f6;border-left:1px solid #c9c9c9;border-right:1px solid #d2d2d2;box-sizing:border-box;"></div>
<div class="a" style="left:1501px;top:715px;width:2px;height:2px;background:#111;"></div>
<div class="a" style="left:1501px;top:719px;width:2px;height:2px;background:#111;"></div>
<div class="a" style="left:1501px;top:723px;width:2px;height:2px;background:#111;"></div>
<div class="a" style="left:1501px;top:727px;width:2px;height:2px;background:#111;"></div>
<div class="a" style="left:1501px;top:731px;width:2px;height:2px;background:#111;"></div>
<div class="a" style="left:1508px;top:236px;width:1302px;height:1014px;border:10px solid #e43a79;"></div>
<span class="t" style="left:1534.0px;top:262px;font-size:28px;line-height:28px;letter-spacing:0.84px;color:#0b0b0b;">Dialog Review</span>
<div class="a" style="left:1533px;top:321px;width:1285px;height:1px;background:#dedede;"></div>
<span class="t" style="left:1533.5px;top:345px;font-size:17.7px;line-height:17.7px;letter-spacing:0.32px;color:#757575;">Date time:</span>
<span class="t" style="left:1856.5px;top:345px;font-size:17.7px;line-height:17.7px;letter-spacing:-0.52px;color:#111;">Jul 22, 2024 <span style="margin:0 -2.32px 0 -0.88px">1</span>2:26:54</span>
<span class="t" style="left:1533.5px;top:380px;font-size:17.7px;line-height:17.7px;letter-spacing:0.51px;color:#757575;">miniApp Name:</span>
<span class="t" style="left:1846.5px;top:380px;font-size:17.7px;line-height:17.7px;letter-spacing:-0.06px;color:#111;">Alphanum1_DEVAws</span>
<span class="t" style="left:1533.5px;top:415px;font-size:17.7px;line-height:17.7px;letter-spacing:0.19px;color:#757575;">Application Version:</span>
<span class="t" style="left:1533.5px;top:450px;font-size:17.7px;line-height:17.7px;letter-spacing:0.03px;color:#757575;">Channel:</span>
<span class="t" style="left:1959.5px;top:450px;font-size:17.7px;line-height:17.7px;letter-spacing:-0.14px;color:#111;">omIVR</span>
<span class="t" style="left:1533.5px;top:486px;font-size:17.7px;line-height:17.7px;letter-spacing:-0.45px;color:#757575;">Session ID:</span>
<span class="t" style="left:1905.5px;top:488px;font-size:17.7px;line-height:17.7px;letter-spacing:-0.90px;color:#111;">eb2...1809</span>
<span class="t" style="left:1533.5px;top:524px;font-size:17.7px;line-height:17.7px;letter-spacing:0.15px;color:#757575;">Connection ID:</span>
<span class="t" style="left:2007.1px;top:528px;font-size:17.7px;line-height:17.7px;letter-spacing:0.53px;color:#111;">-</span>
<svg style="left:1995px;top:484px" width="18" height="18" viewBox="0 0 18 18"><g fill="none" stroke="#3d8bfd" stroke-width="1.5" stroke-linejoin="round"><rect x="1" y="5.500" width="11.500" height="11.500" rx="1.200"/><path d="M5.500 3V1H17v11.500h-2"/></g></svg>
<span class="t" style="left:2040.4px;top:345px;font-size:17.7px;line-height:17.7px;letter-spacing:0.28px;color:#757575;">Duration:</span>
<span class="t" style="left:2461.6px;top:345px;font-size:17.7px;line-height:17.7px;letter-spacing:-0.64px;color:#111;"><span style="margin:0 -2.32px 0 -0.88px">1</span>:54.87<span style="margin:0 -2.32px 0 -0.88px">1</span></span>
<span class="t" style="left:2040.4px;top:380px;font-size:17.7px;line-height:17.7px;letter-spacing:0.27px;color:#757575;">miniApp Type:</span>
<span class="t" style="left:2405.1px;top:380px;font-size:17.7px;line-height:17.7px;letter-spacing:0.58px;color:#111;">Alphanumeric</span>
<span class="t" style="left:2040.4px;top:415px;font-size:17.7px;line-height:17.7px;letter-spacing:-0.12px;color:#757575;">Group:</span>
<span class="t" style="left:2463.1px;top:415px;font-size:17.7px;line-height:17.7px;letter-spacing:0.48px;color:#111;">ocp-qa</span>
<span class="t" style="left:2040.4px;top:450px;font-size:17.7px;line-height:17.7px;letter-spacing:-0.47px;color:#757575;">ANI:</span>
<div class="a" style="left:2402px;top:442.5px;width:127px;height:27px;background:#f4f4f4;"></div>
<div class="a" style="left:2410px;top:448px;width:111px;height:16px;background:#e9e9e9;filter:blur(6px);"></div>
<span class="t" style="left:2040.4px;top:486px;font-size:17.7px;line-height:17.7px;letter-spacing:-0.02px;color:#757575;">Dialog ID:</span>
<span class="t" style="left:2413.0px;top:488px;font-size:17.7px;line-height:17.7px;letter-spacing:-1.01px;color:#111;">a12...95b4</span>
<svg style="left:2501px;top:484px" width="18" height="18" viewBox="0 0 18 18"><g fill="none" stroke="#3d8bfd" stroke-width="1.5" stroke-linejoin="round"><rect x="1" y="5.500" width="11.500" height="11.500" rx="1.200"/><path d="M5.500 3V1H17v11.500h-2"/></g></svg>
<span class="t" style="left:2040.4px;top:524px;font-size:17.7px;line-height:17.7px;letter-spacing:0.05px;color:#757575;">Dialog Group ID:</span>
<span class="t" style="left:2413.0px;top:526px;font-size:17.7px;line-height:17.7px;letter-spacing:-1.01px;color:#111;">a12...95b4</span>
<svg style="left:2501px;top:522.5px" width="18" height="18" viewBox="0 0 18 18"><g fill="none" stroke="#3d8bfd" stroke-width="1.5" stroke-linejoin="round"><rect x="1" y="5.500" width="11.500" height="11.500" rx="1.200"/><path d="M5.500 3V1H17v11.500h-2"/></g></svg>
<div class="a" style="left:1533px;top:581px;width:149px;height:40px;border-radius:6px;background:#0d6efd;box-shadow:0 2px 4px rgba(0,0,0,.22);"></div>
<span class="t" style="left:1554.8px;top:593px;font-size:16.8px;line-height:16.8px;letter-spacing:0.29px;color:#fff;font-weight:700;">Show events</span>
<div class="a" style="left:1709px;top:581px;width:138px;height:38px;border:1px solid #0d6efd;border-radius:6px;background:#fff;box-shadow:0 0 0 .15px #0d6efd,0 3px 6px rgba(0,0,0,.13);"></div>
<svg style="left:1730px;top:590px" width="22" height="22" viewBox="0 0 22 22"><g fill="none" stroke="#0d6efd" stroke-width="2.200" stroke-linecap="round" stroke-linejoin="round"><path d="M8.500 3.500H2.800V19h15.500v-6"/><path d="M12.500 2.500h7v7M19 3L9 13"/></g></svg>
<span class="t" style="left:1761.4px;top:593px;font-size:16.8px;line-height:16.8px;letter-spacing:0.10px;color:#0d6efd;font-weight:700;">Log File</span>
<svg style="left:1876px;top:588px" width="27" height="27" viewBox="0 0 27 27"><g fill="none" stroke="#3d8cf8" stroke-width="1.6" stroke-linejoin="round"><path d="M3.6 7.5V5.7L8.7 0.9H22V7.5M3.6 22.8V25.1H22V22.8"/><path d="M8.7 0.9V5.7H3.6" fill="#3d8cf8" fill-opacity=".35"/></g><rect x="0.3" y="11" width="26.2" height="9.6" rx=".8" fill="#3d8cf8"/></svg>
<span class="t" style="left:1878.2px;top:601px;font-size:7.6px;line-height:7.6px;letter-spacing:0.64px;color:#fff;font-weight:700;-webkit-text-stroke:.45px #fff;">JSON</span>
<svg style="left:1930px;top:588px" width="27" height="27" viewBox="0 0 27 27"><g fill="none" stroke="#3d8cf8" stroke-width="1.6" stroke-linejoin="round"><path d="M19.5 10V0.9H6L0.9 6.2V25.2H19.5V20.500"/><path d="M6 0.9V6.2H0.9" fill="#3d8cf8" fill-opacity=".35"/></g><rect x="4.6" y="10" width="20.9" height="10" rx=".8" fill="#3d8cf8"/></svg>
<span class="t" style="left:1937.2px;top:600px;font-size:7.6px;line-height:7.6px;letter-spacing:0.92px;color:#fff;font-weight:700;-webkit-text-stroke:.45px #fff;">RTF</span>
<span class="t" style="left:1530.8px;top:666px;font-size:17.7px;line-height:17.7px;letter-spacing:0.53px;color:#333;">1</span>
<div class="a" style="left:1533px;top:695px;width:30px;height:26px;border-left:1px solid #cfcfcf;border-bottom:1px solid #cfcfcf;border-bottom-left-radius:30px 26px;box-sizing:border-box;"></div>
<div class="a" style="left:1555px;top:661px;width:40px;height:40px;border-radius:20px;background:#f0f0f0;"></div>
<svg style="left:1565px;top:668px" width="20" height="26" viewBox="0 0 20 26"><g fill="none" stroke="#5f7bc9" stroke-width="2.1" stroke-linejoin="round" stroke-linecap="round"><rect x="2.15" y="9.15" width="15.7" height="14.6" rx="1"/><path d="M9.9 9V3"/><path d="M7.1 19.8H13" stroke-width="1.7"/></g><circle cx="9.9" cy="2.5" r="1.7" fill="#5f7bc9"/><circle cx="7.2" cy="13.9" r="1.05" fill="#5f7bc9"/><circle cx="12.600" cy="13.900" r="1.050" fill="#5f7bc9"/></svg>
<div class="a" style="left:1608px;top:661px;width:754.5px;height:60px;border-radius:3px 30px 30px 30px;background:#f0f0f0;"></div>
<span class="t" style="left:1635.5px;top:679px;font-size:19.6px;line-height:19.6px;letter-spacing:0.54px;color:#111;">Welcome to our new voice-enabled service line. I&#x27;ll be your Virtual Assistant.</span>
<span class="t" style="left:1530.8px;top:759px;font-size:17.7px;line-height:17.7px;letter-spacing:0.53px;color:#333;">2</span>
<div class="a" style="left:1533px;top:787px;width:30px;height:26px;border-left:1px solid #cfcfcf;border-bottom:1px solid #cfcfcf;border-bottom-left-radius:30px 26px;box-sizing:border-box;"></div>
<div class="a" style="left:1555px;top:753px;width:40px;height:40px;border-radius:20px;background:#f0f0f0;"></div>
<svg style="left:1565px;top:760px" width="20" height="26" viewBox="0 0 20 26"><g fill="none" stroke="#5f7bc9" stroke-width="2.1" stroke-linejoin="round" stroke-linecap="round"><rect x="2.15" y="9.15" width="15.7" height="14.6" rx="1"/><path d="M9.9 9V3"/><path d="M7.1 19.8H13" stroke-width="1.7"/></g><circle cx="9.9" cy="2.5" r="1.7" fill="#5f7bc9"/><circle cx="7.2" cy="13.9" r="1.05" fill="#5f7bc9"/><circle cx="12.600" cy="13.900" r="1.050" fill="#5f7bc9"/></svg>
<div class="a" style="left:1608px;top:753px;width:349px;height:60px;border-radius:3px 30px 30px 30px;background:#f0f0f0;"></div>
<span class="t" style="left:1635.5px;top:771px;font-size:19.6px;line-height:19.6px;letter-spacing:0.66px;color:#111;">Please tell me your information.</span>
<span class="t" style="left:1530.8px;top:854px;font-size:17.7px;line-height:17.7px;letter-spacing:0.53px;color:#333;">3</span>
<div class="a" style="left:1533px;top:882px;width:30px;height:83.5px;border-left:1px solid #cfcfcf;border-bottom:1px solid #cfcfcf;border-bottom-left-radius:30px 26px;box-sizing:border-box;"></div>
<div class="a" style="left:2497px;top:845.2px;width:257px;height:49.500px;border-radius:25px 3px 25px 25px;background:#e6f0ff;"></div>
<span class="t" style="left:2523.5px;top:861px;font-size:19.6px;line-height:19.6px;letter-spacing:0.89px;color:#111;">**encrypted content**</span>
<span class="t" style="left:2464.5px;top:858px;font-size:22.5px;line-height:22.5px;letter-spacing:0.00px;color:#6a6a6a;font-family:'DejaVu Sans',sans-serif;">#</span>
<svg style="left:2428px;top:862.7px" width="15" height="9" viewBox="0 0 15 9"><path d="M1.500 1.500l6 6 6-6" fill="none" stroke="#5f5f5f" stroke-width="2.100" stroke-linecap="round" stroke-linejoin="round"/></svg>
<svg style="left:2767px;top:837.7px" width="40" height="40" viewBox="0 0 40 40"><circle cx="20" cy="20" r="20" fill="#e6f0ff"/><circle cx="20" cy="15.200" r="5.400" fill="#f8fbff"/><ellipse cx="20" cy="25.900" rx="10.300" ry="5.300" fill="#f8fbff"/></svg>
<span class="t" style="left:2770.4px;top:886px;font-size:15.3px;line-height:15.3px;letter-spacing:-0.55px;color:#6a6a6a;"><span style="margin:0 -1.89px 0 -0.72px">1</span>2:27</span>
<div class="a" style="left:1555px;top:905px;width:40px;height:40px;border-radius:20px;background:#f0f0f0;"></div>
<svg style="left:1565px;top:912px" width="20" height="26" viewBox="0 0 20 26"><g fill="none" stroke="#5f7bc9" stroke-width="2.1" stroke-linejoin="round" stroke-linecap="round"><rect x="2.15" y="9.15" width="15.7" height="14.6" rx="1"/><path d="M9.9 9V3"/><path d="M7.1 19.8H13" stroke-width="1.7"/></g><circle cx="9.9" cy="2.5" r="1.7" fill="#5f7bc9"/><circle cx="7.2" cy="13.9" r="1.05" fill="#5f7bc9"/><circle cx="12.600" cy="13.900" r="1.050" fill="#5f7bc9"/></svg>
<div class="a" style="left:1608px;top:905px;width:882.5px;height:60px;border-radius:3px 30px 30px 30px;background:#f0f0f0;"></div>
<span class="t" style="left:1635.5px;top:923px;font-size:19.6px;line-height:19.6px;letter-spacing:0.36px;color:#111;">The information 1234123412341234 you provided is wrong. Please tell me your information.</span>
<span class="t" style="left:1530.8px;top:1007px;font-size:17.7px;line-height:17.7px;letter-spacing:0.53px;color:#333;">4</span>
<div class="a" style="left:1533px;top:1035px;width:30px;height:83px;border-left:1px solid #cfcfcf;border-bottom:1px solid #cfcfcf;border-bottom-left-radius:30px 26px;box-sizing:border-box;"></div>
<div class="a" style="left:1869px;top:997.4px;width:885px;height:49.500px;border-radius:25px 3px 25px 25px;background:#e6f0ff;"></div>
<span class="t" style="left:1895.5px;top:1013px;font-size:19.6px;line-height:19.6px;letter-spacing:0.59px;color:#111;">my order id is l_g l_p one eight l_o nine seven five and it was placed on the twelfth of june</span>
<span class="t" style="left:1836.5px;top:1010px;font-size:22.5px;line-height:22.5px;letter-spacing:0.00px;color:#6a6a6a;font-family:'DejaVu Sans',sans-serif;">#</span>
<svg style="left:1800px;top:1014.9px" width="15" height="9" viewBox="0 0 15 9"><path d="M1.500 1.500l6 6 6-6" fill="none" stroke="#5f5f5f" stroke-width="2.100" stroke-linecap="round" stroke-linejoin="round"/></svg>
<svg style="left:2767px;top:989.9px" width="40" height="40" viewBox="0 0 40 40"><circle cx="20" cy="20" r="20" fill="#e6f0ff"/><circle cx="20" cy="15.200" r="5.400" fill="#f8fbff"/><ellipse cx="20" cy="25.900" rx="10.300" ry="5.300" fill="#f8fbff"/></svg>
<span class="t" style="left:2770.4px;top:1038px;font-size:15.3px;line-height:15.3px;letter-spacing:-0.55px;color:#6a6a6a;"><span style="margin:0 -1.89px 0 -0.72px">1</span>2:28</span>
<div class="a" style="left:1555px;top:1058px;width:40px;height:40px;border-radius:20px;background:#f0f0f0;"></div>
<svg style="left:1565px;top:1065px" width="20" height="26" viewBox="0 0 20 26"><g fill="none" stroke="#5f7bc9" stroke-width="2.1" stroke-linejoin="round" stroke-linecap="round"><rect x="2.15" y="9.15" width="15.7" height="14.6" rx="1"/><path d="M9.9 9V3"/><path d="M7.1 19.8H13" stroke-width="1.7"/></g><circle cx="9.9" cy="2.5" r="1.7" fill="#5f7bc9"/><circle cx="7.2" cy="13.9" r="1.05" fill="#5f7bc9"/><circle cx="12.600" cy="13.900" r="1.050" fill="#5f7bc9"/></svg>
<div class="a" style="left:1608px;top:1058px;width:585px;height:60px;border-radius:3px 30px 30px 30px;background:#f0f0f0;"></div>
<span class="t" style="left:1635.5px;top:1076px;font-size:19.6px;line-height:19.6px;letter-spacing:-0.00px;color:#111;">Thank you. To confirm, you said g, p, 1, 8, o, 9, 7, 5, Correct?</span>
<span class="t" style="left:1530.8px;top:1156px;font-size:17.7px;line-height:17.7px;letter-spacing:0.53px;color:#333;">5</span>
<div class="a" style="left:1533px;top:1185px;width:30px;height:25px;border-left:1px solid #cfcfcf;border-bottom:1px solid #cfcfcf;border-bottom-left-radius:30px 26px;box-sizing:border-box;"></div>
<div class="a" style="left:2625.3px;top:1150.2px;width:128.7px;height:49.500px;border-radius:25px 3px 25px 25px;background:#e6f0ff;"></div>
<span class="t" style="left:2651.8px;top:1166px;font-size:19.6px;line-height:19.6px;letter-spacing:0.81px;color:#111;">proceed</span>
<span class="t" style="left:2592.8px;top:1163px;font-size:22.5px;line-height:22.5px;letter-spacing:0.00px;color:#6a6a6a;font-family:'DejaVu Sans',sans-serif;">#</span>
<svg style="left:2556.3px;top:1167.7px" width="15" height="9" viewBox="0 0 15 9"><path d="M1.500 1.500l6 6 6-6" fill="none" stroke="#5f5f5f" stroke-width="2.100" stroke-linecap="round" stroke-linejoin="round"/></svg>
<svg style="left:2767px;top:1142.7px" width="40" height="40" viewBox="0 0 40 40"><circle cx="20" cy="20" r="20" fill="#e6f0ff"/><circle cx="20" cy="15.200" r="5.400" fill="#f8fbff"/><ellipse cx="20" cy="25.900" rx="10.300" ry="5.300" fill="#f8fbff"/></svg>
<span class="t" style="left:2770.4px;top:1191px;font-size:15.3px;line-height:15.3px;letter-spacing:-0.55px;color:#6a6a6a;"><span style="margin:0 -1.89px 0 -0.72px">1</span>2:28</span>
<div class="a" style="left:134px;top:1248px;width:2620px;height:68px;background:linear-gradient(rgba(0,0,0,0),rgba(0,0,0,.025) 35%,rgba(0,0,0,.095));-webkit-mask-image:linear-gradient(90deg,#000 0,#000 88%,rgba(0,0,0,0) 100%);mask-image:linear-gradient(90deg,#000 0,#000 88%,rgba(0,0,0,0) 100%);pointer-events:none;"></div>
</body></html>
